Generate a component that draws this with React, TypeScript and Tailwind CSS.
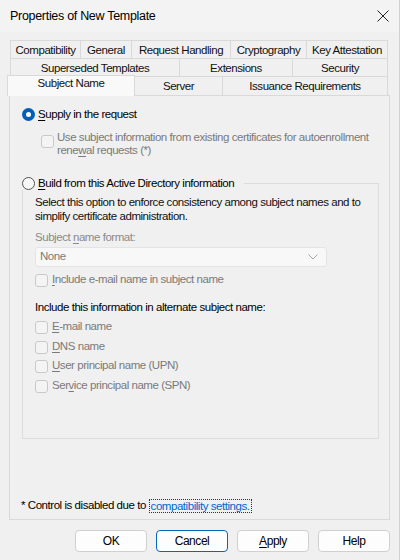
import React from 'react';

const U: React.FC<{ children: React.ReactNode }> = ({ children }) => (
  <span className="underline underline-offset-[1.5px] decoration-[1px]">{children}</span>
);

const Tab: React.FC<{ label: string; className: string; last?: boolean }> = ({ label, className, last }) => (
  <div
    className={`h-[18px] pt-[2px] flex items-center justify-center border-t border-l border-[#d9d9d9] bg-[#f0f0f0] ${last ? 'border-r' : ''} ${className}`}
  >
    {label}
  </div>
);

const Checkbox: React.FC = () => (
  <span className="block w-[13px] h-[13px] shrink-0 rounded-[3px] border border-[#c9c9c9] bg-[#f4f4f4]" />
);

const CheckRow: React.FC<{ children: React.ReactNode; className?: string }> = ({ children, className }) => (
  <div className={`flex items-center gap-[4px] h-[14px] text-[#7a7a7a] ${className ?? ''}`}>
    <Checkbox />
    <span>{children}</span>
  </div>
);

const Button: React.FC<{ children: React.ReactNode; primary?: boolean }> = ({ children, primary }) => (
  <button
    className={`w-[72px] h-[22px] rounded-[4px] bg-[#fdfdfd] text-[12px] text-black flex items-center justify-center ${
      primary ? 'border border-[#0067c0] shadow-[inset_0_0_0_1px_#ffffff]' : 'border border-[#d0d0d0]'
    }`}
  >
    {children}
  </button>
);

export default function App() {
  return (
    <div className="w-[400px] h-[560px] bg-[#f0f0f0] border-r border-[#d0d0d0] flex flex-col font-['Liberation_Sans',Arial,sans-serif] text-[11.5px] tracking-[-0.45px] text-[#111] select-none overflow-hidden">
      {/* title bar */}
      <div className="h-[32px] flex items-center justify-between pl-[10px] pr-[9px] bg-[#f3f3f3]">
        <span className="text-[12.5px] tracking-[-0.3px] text-black">Properties of New Template</span>
        <svg width="12" height="12" viewBox="0 0 12 12" className="mr-[1px]">
          <path d="M0.5 0.5 L11.5 11.5 M11.5 0.5 L0.5 11.5" stroke="#222" strokeWidth="1" fill="none" />
        </svg>
      </div>

      {/* tabs */}
      <div className="mt-[8px] flex flex-col">
        <div className="flex pl-[10px]">
          <Tab label="Compatibility" className="w-[70px]" />
          <Tab label="General" className="w-[51px]" />
          <Tab label="Request Handling" className="w-[99px]" />
          <Tab label="Cryptography" className="w-[76px]" />
          <Tab label="Key Attestation" className="w-[82px]" last />
        </div>
        <div className="flex pl-[10px]">
          <Tab label="Superseded Templates" className="w-[169px]" />
          <Tab label="Extensions" className="w-[113px]" />
          <Tab label="Security" className="w-[96px]" last />
        </div>
        <div className="flex pl-[7px] h-[19px] items-start relative z-10">
          <div className="w-[128px] h-[21px] -mt-[1px] flex items-center pb-[5px] justify-center border-t border-l border-r border-[#d9d9d9] bg-[#f9f9f9]">
            Subject Name
          </div>
          <div className="w-[87px] h-[19px] flex items-center justify-center border-t border-[#d9d9d9] pt-[2px]">Server</div>
          <div className="w-[166px] h-[19px] flex items-center justify-center border-t border-l border-r border-[#d9d9d9] pt-[2px]">
            Issuance Requirements
          </div>
        </div>
      </div>

      {/* panel */}
      <div className="ml-[9px] w-[381px] h-[425px] border border-[#d9d9d9] bg-[#f0f0f0] flex flex-col pl-[12px] pr-[10px]">
        <div className="mt-[12px] flex items-center gap-[3px] h-[13px] text-black">
          <span className="w-[13px] h-[13px] rounded-full bg-[#005fb8] flex items-center justify-center">
            <span className="w-[5px] h-[5px] rounded-full bg-white" />
          </span>
          <span>
            <U>S</U>upply in the request
          </span>
        </div>

        <div className="mt-[10px] ml-[19px] flex items-start gap-[3px] text-[#7a7a7a] leading-[13px]">
          <span className="block mt-[4px]">
            <Checkbox />
          </span>
          <span>
            Use subject information from existing certificates for autoenrollment
            <br />
            rene<U>w</U>al requests (*)
          </span>
        </div>

        <fieldset className="mt-[20px] border border-[#dcdcdc] px-[12px] pb-[45px] m-0 min-w-0">
          <legend className="-ml-[13px] pr-[10px] h-[13px] flex items-center gap-[3px] text-black">
            <span className="w-[13px] h-[13px] rounded-full border border-[#555] bg-[#f7f7f7]" />
            <span>
              <U>B</U>uild from this Active Directory information
            </span>
          </legend>

          <div className="mt-[5px] leading-[14px] text-[#111]">
            Select this option to enforce consistency among subject names and to
            <br />
            simplify certificate administration.
          </div>

          <div className="mt-[7px] leading-[14px] text-[#8a8a8a]">
            Subject <U>n</U>ame format:
          </div>

          <div className="mt-[3px] w-[292px] h-[20px] rounded-[3px] border border-[#e4e4e4] bg-[#f8f8f8] flex items-center justify-between pl-[4px] pr-[8px] text-[#7a7a7a]">
            <span>None</span>
            <svg width="10" height="6" viewBox="0 0 10 6">
              <path d="M0.5 0.5 L5 5 L9.5 0.5" stroke="#a8a8a8" strokeWidth="1" fill="none" />
            </svg>
          </div>

          <CheckRow className="mt-[6px]">
            <U>I</U>nclude e-mail name in subject name
          </CheckRow>

          <div className="mt-[13px] leading-[14px] text-black">Include this information in alternate subject name:</div>

          <CheckRow className="mt-[6px]">
            <U>E</U>-mail name
          </CheckRow>
          <CheckRow className="mt-[6px]">
            <U>D</U>NS name
          </CheckRow>
          <CheckRow className="mt-[5px]">
            <U>U</U>ser principal name (UPN)
          </CheckRow>
          <CheckRow className="mt-[6px]">
            Ser<U>v</U>ice principal name (SPN)
          </CheckRow>
        </fieldset>

        <div className="mt-auto mb-[6px] -ml-[1px] flex items-center h-[14px] text-black">
          <span>* Control is disabled due to&nbsp;</span>
          <span className="border border-dotted border-[#333] px-[1px] text-[#0066cc] leading-[12px]">
            compatibility settings.
          </span>
        </div>
      </div>

      {/* buttons */}
      <div className="mt-[10px] flex justify-end gap-[9px] pr-[9px]">
        <Button>OK</Button>
        <Button primary>Cancel</Button>
        <Button>
          <U>A</U>pply
        </Button>
        <Button>Help</Button>
      </div>
    </div>
  );
}
